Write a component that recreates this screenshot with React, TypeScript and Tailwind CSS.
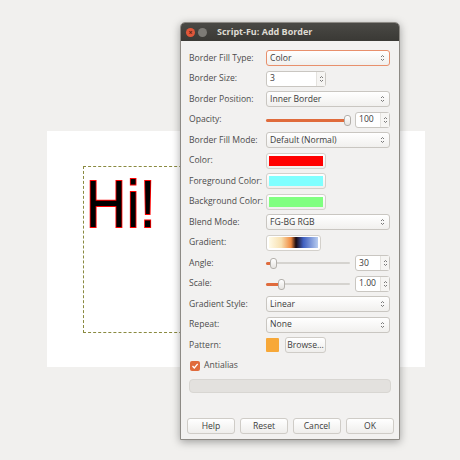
import React from "react";

const font = { fontFamily: '"Open Sans", "DejaVu Sans", sans-serif' };

function Arrows() {
  return (
    <svg width="5" height="8" viewBox="0 0 5 8" className="shrink-0">
      <path d="M1 3 L2.5 1.5 L4 3" fill="none" stroke="#6b6b6b" strokeWidth="0.9" />
      <path d="M1 5 L2.5 6.5 L4 5" fill="none" stroke="#6b6b6b" strokeWidth="0.9" />
    </svg>
  );
}

function Combo({ text, focus = false }: { text: string; focus?: boolean }) {
  return (
    <div
      className={`flex h-[16px] w-[124px] items-center justify-between rounded-[3px] border bg-gradient-to-b from-[#ffffff] to-[#f1f0ee] pl-[3px] pr-[4px] text-[8.6px] text-[#3c3c3c] ${
        focus ? "border-[#e8906c]" : "border-[#c9c6c1]"
      }`}
    >
      <span>{text}</span>
      <Arrows />
    </div>
  );
}

function Spin({ value, w }: { value: string; w: string }) {
  return (
    <div className={`flex h-[16px] ${w} items-center rounded-[3px] border border-[#c9c6c1] bg-white text-[8.6px] text-[#3c3c3c]`}>
      <span className="flex-1 pl-[3px]">{value}</span>
      <div className="flex h-full w-[9px] items-center justify-center border-l border-[#e4e2de] bg-[#f6f5f3]">
        <Arrows />
      </div>
    </div>
  );
}

function Slider({ pct, w }: { pct: number; w: string }) {
  return (
    <div className={`relative flex h-[16px] ${w} items-center`}>
      <div className="h-[2px] w-full rounded bg-[#d5d3cf]" />
      <div className="absolute left-0 top-[7px] h-[3px] rounded bg-[#e06b3c]" style={{ width: `${pct}%` }} />
      <div
        className="absolute top-[3px] h-[11px] w-[7px] rounded-[3px] border border-[#b3b0ab] bg-gradient-to-b from-white to-[#e6e4e1]"
        style={{ left: `calc(${pct}% - 3px)` }}
      />
    </div>
  );
}

function ColorBtn({ color }: { color: string }) {
  return (
    <div className="flex h-[16px] w-[60px] items-center justify-center rounded-[3px] border border-[#d3d0cb] bg-gradient-to-b from-white to-[#f0efed]">
      <div className="h-[10px] w-[54px]" style={{ background: color }} />
    </div>
  );
}

function Row({ label, children }: { label: string; children: React.ReactNode }) {
  return (
    <div className="flex h-[20.5px] items-center">
      <div className="w-[77px] shrink-0 whitespace-nowrap text-[8.6px] text-[#4c4c4c]">{label}</div>
      <div className="flex items-center gap-[5px]">{children}</div>
    </div>
  );
}

function Btn({ text }: { text: string }) {
  return (
    <div className="flex h-[16px] w-[48px] items-center justify-center rounded-[3px] border border-[#cfccc7] bg-gradient-to-b from-white to-[#efeeec] text-[8.6px] text-[#3c3c3c]">
      {text}
    </div>
  );
}

export default function App() {
  return (
    <div className="relative h-[460px] w-[460px] overflow-hidden bg-[#f1f0ee]" style={font}>
      {/* canvas */}
      <div className="absolute left-[47px] top-[131px] h-[236px] w-[378px] bg-white">
        <div
          className="absolute left-[36px] top-[35px] h-[167px] w-[160px]"
          style={{ border: "1px dashed #8a8a40" }}
        />
        <div
          className="absolute left-[39px] top-[40px] origin-left scale-x-[0.84] text-[66px] leading-none text-black"
          style={{
            fontFamily: '"Liberation Sans", Arial, sans-serif',
            WebkitTextStroke: "2px #ff0000",
            paintOrder: "stroke fill",
            letterSpacing: "1px",
          }}
        >
          Hi!
        </div>
      </div>

      {/* dialog */}
      <div className="absolute left-[180px] top-[22px] flex h-[418px] w-[220px] flex-col overflow-hidden rounded-t-[5px] border border-[#8d8a85] bg-[#f2f1f0] shadow-[0_2px_8px_rgba(0,0,0,0.35)]">
        <div className="flex h-[18px] shrink-0 items-center bg-gradient-to-b from-[#4a4945] to-[#3a3935] pl-[5px]">
          <div className="h-[9px] w-[9px] rounded-full bg-[#e0573a] text-center text-[7px] font-bold leading-[9px] text-[#5a2010]">
            ×
          </div>
          <div className="ml-[3px] h-[9px] w-[9px] rounded-full bg-[#7d7b76]" />
          <div className="ml-[10px] text-[9px] font-bold text-[#dfdbd2]">Script-Fu: Add Border</div>
        </div>
        <div className="flex flex-1 flex-col pl-[8px] pr-[9px] pt-[7px]">
          <Row label="Border Fill Type:">
            <Combo text="Color" focus />
          </Row>
          <Row label="Border Size:">
            <Spin value="3" w="w-[60px]" />
          </Row>
          <Row label="Border Position:">
            <Combo text="Inner Border" />
          </Row>
          <Row label="Opacity:">
            <Slider pct={96} w="w-[84px]" />
            <Spin value="100" w="w-[35px]" />
          </Row>
          <Row label="Border Fill Mode:">
            <Combo text="Default (Normal)" />
          </Row>
          <Row label="Color:">
            <ColorBtn color="#ff0000" />
          </Row>
          <Row label="Foreground Color:">
            <ColorBtn color="#80ffff" />
          </Row>
          <Row label="Background Color:">
            <ColorBtn color="#80ff80" />
          </Row>
          <Row label="Blend Mode:">
            <Combo text="FG-BG RGB" />
          </Row>
          <Row label="Gradient:">
            <div className="flex h-[16px] w-[55px] items-center justify-center rounded-[3px] border border-[#d3d0cb] bg-white">
              <div
                className="h-[11px] w-[49px]"
                style={{
                  background:
                    "linear-gradient(to right, #fffbe8 0%, #f8e0b0 25%, #f08a40 45%, #1a0a10 55%, #4060c0 70%, #b8cdf0 100%)",
                }}
              />
            </div>
          </Row>
          <Row label="Angle:">
            <Slider pct={8} w="w-[84px]" />
            <Spin value="30" w="w-[35px]" />
          </Row>
          <Row label="Scale:">
            <Slider pct={18} w="w-[84px]" />
            <Spin value="1.00" w="w-[35px]" />
          </Row>
          <Row label="Gradient Style:">
            <Combo text="Linear" />
          </Row>
          <Row label="Repeat:">
            <Combo text="None" />
          </Row>
          <Row label="Pattern:">
            <div className="h-[14px] w-[13px] rounded-[1px] bg-[#f7a838]" />
            <div className="ml-[1px] flex h-[16px] w-[41px] items-center justify-center rounded-[3px] border border-[#cfccc7] bg-gradient-to-b from-white to-[#efeeec] text-[8.6px] text-[#3c3c3c]">
              Browse...
            </div>
          </Row>
          <div className="flex h-[20.5px] items-center gap-[4px] pl-[1px]">
            <div className="flex h-[10px] w-[10px] items-center justify-center rounded-[2px] bg-[#e06b3c]">
              <svg width="8" height="8" viewBox="0 0 8 8">
                <path d="M1.5 4 L3.3 6 L6.7 1.8" fill="none" stroke="#fff" strokeWidth="1.3" />
              </svg>
            </div>
            <span className="text-[8.6px] text-[#4c4c4c]">Antialias</span>
          </div>
          <div className="mt-[3px] h-[14px] w-[202px] rounded-[4px] border border-[#d8d6d2] bg-[#e3e1de]" />
        </div>
        <div className="flex gap-[5px] pb-[5px] pl-[6px]">
          <Btn text="Help" />
          <Btn text="Reset" />
          <Btn text="Cancel" />
          <Btn text="OK" />
        </div>
      </div>
    </div>
  );
}
